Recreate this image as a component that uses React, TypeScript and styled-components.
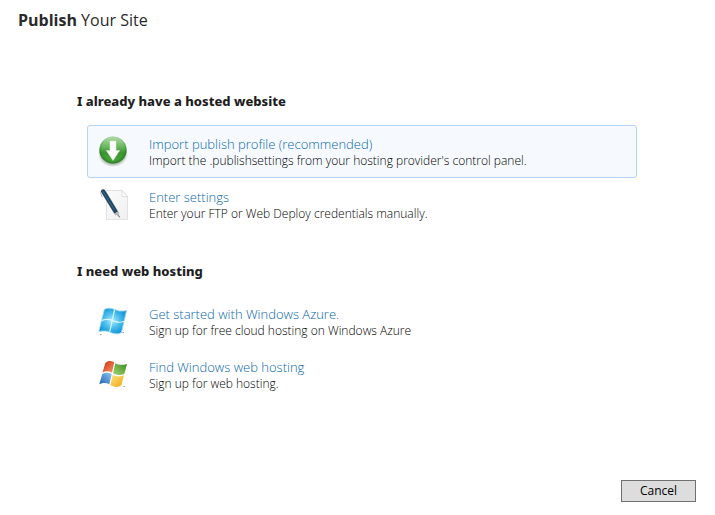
import React from "react";
import styled, { createGlobalStyle } from "styled-components";

const GlobalStyle = createGlobalStyle`
  * { box-sizing: border-box; }
  html, body, #root { height: 100%; }
  body {
    margin: 0;
    background: #ffffff;
    color: #333333;
    font-family: "Open Sans", "Noto Sans", sans-serif;
  }
`;

const Dialog = styled.div`
  min-height: 100%;
  display: flex;
  flex-direction: column;
`;

const Title = styled.h1`
  margin: 0;
  padding: 8px 18px;
  font-size: 16px;
  line-height: 24px;
  font-weight: 400;
  color: #2a2a2a;

  strong { font-weight: 700; }
`;

const Content = styled.main`
  flex: 1;
  padding: 51px 78px 0 77px;
`;

const Section = styled.section`
  margin-bottom: 30px;
`;

const SectionTitle = styled.h2`
  margin: 0 0 14px;
  font-family: "Noto Sans", "Open Sans", sans-serif;
  font-size: 13px;
  line-height: 20px;
  font-weight: 800;
  color: #1e1e1e;
`;

const OptionList = styled.ul`
  margin: 0;
  padding: 0 0 0 10px;
  list-style: none;
`;

const Option = styled.a<{ $active?: boolean }>`
  display: flex;
  align-items: center;
  gap: 19px;
  height: 53px;
  padding: 0 10px;
  border: 1px solid ${(p) => (p.$active ? "#b4d3f8" : "transparent")};
  border-radius: 3px;
  background: ${(p) => (p.$active ? "#f6fafe" : "transparent")};
  text-decoration: none;

  svg { flex: none; }
`;

const OptionText = styled.span`
  display: flex;
  flex-direction: column;
  padding-top: 2px;
  font-weight: 300;
`;

const OptionTitle = styled.span`
  font-size: 13px;
  line-height: 17px;
  color: #0a68ac;
`;

const OptionDetail = styled.span`
  font-size: 12px;
  line-height: 16px;
  color: #000000;
`;

const Footer = styled.footer`
  display: flex;
  justify-content: flex-end;
  padding: 13px 19px;
`;

const CancelButton = styled.button`
  width: 75px;
  height: 22px;
  padding: 0;
  border: 1px solid #707070;
  background: #dddddd;
  color: #000000;
  font-family: inherit;
  font-size: 12px;
  line-height: 16px;
`;

const ImportIcon = () => (
  <svg width="32" height="32" viewBox="0 0 32 32" aria-hidden="true">
    <defs>
      <linearGradient id="ball" x1="0" y1="0" x2="0" y2="1">
        <stop offset="0" stopColor="#b4dcac" />
        <stop offset="0.4" stopColor="#66b55b" />
        <stop offset="0.6" stopColor="#3a9630" />
        <stop offset="1" stopColor="#48ad3b" />
      </linearGradient>
      <radialGradient id="ballShade" cx="0.5" cy="0.45" r="0.55">
        <stop offset="0.75" stopColor="#1c5b17" stopOpacity="0" />
        <stop offset="1" stopColor="#1c5b17" stopOpacity="0.6" />
      </radialGradient>
      <radialGradient id="ballShadow">
        <stop offset="0.7" stopColor="#506050" stopOpacity="0.55" />
        <stop offset="1" stopColor="#506050" stopOpacity="0" />
      </radialGradient>
    </defs>
    <ellipse cx="15" cy="18" rx="15" ry="13" fill="url(#ballShadow)" />
    <circle cx="15" cy="14" r="13.6" fill="url(#ball)" />
    <circle cx="15" cy="14" r="13.6" fill="url(#ballShade)" />
    <path d="M12 5h6v9.500h3.700L15 24.500 8.300 14.500H12z" fill="#ffffff" stroke="#d8ead5" strokeWidth="0.5" />
  </svg>
);

const SettingsIcon = () => (
  <svg width="32" height="32" viewBox="0 0 32 32" aria-hidden="true">
    <defs>
      <linearGradient id="sheet" x1="0" y1="0" x2="1" y2="1">
        <stop offset="0" stopColor="#fcfcfc" />
        <stop offset="1" stopColor="#f0f0f0" />
      </linearGradient>
    </defs>
    <path d="M8.500 1.500H24l5.500 6v23h-21z" fill="url(#sheet)" stroke="#e2e2e2" />
    <path d="M24 1.500v6h5.500z" fill="#ffffff" stroke="#d8d8d8" strokeWidth="0.8" />
    <path d="M7 5 19.500 25.500" stroke="#c9ccd0" strokeWidth="5" />
    <path d="M5.200 2.400 17.800 23" stroke="#1f4560" strokeWidth="4.200" strokeLinecap="round" />
    <path d="M4.800 2.200 16.500 21" stroke="#3f6c8a" strokeWidth="1" />
    <path d="M2.500 2.500 4 8" stroke="#a5adb4" strokeWidth="1" />
    <path d="M16.200 24.500 20 22.300 22 28.500z" fill="#b2b6ba" />
    <path d="m20.500 26.500 1.200 2" stroke="#777777" strokeWidth="1" />
  </svg>
);

const PANES: { id: string; d: string; from: string; to: string }[] = [
  {
    id: "paneRed",
    d: "M7.200 4.200C10 1.500 13 1.600 16.300 3.300L14 13.600C10.800 11.900 7.500 12 4.500 13.500z",
    from: "#c92d12",
    to: "#f79a6a",
  },
  {
    id: "paneGreen",
    d: "M17.300 4.200C20.500 6 24.500 6.400 29 5L26.300 14.900C22.300 16.600 18.300 16.200 15 14.300z",
    from: "#398a1c",
    to: "#a5d673",
  },
  {
    id: "paneBlue",
    d: "M4.200 14.900C7.300 13.300 10.500 13.300 13.700 15L11.300 25.200C8 23.300 5 23.700 1.300 25.200z",
    from: "#2262b4",
    to: "#8dc8ef",
  },
  {
    id: "paneYellow",
    d: "M14.700 15.700C18.300 17.700 22 18 26 16.300L23.300 26.300C19.800 28.900 15.800 28 12.300 25.900z",
    from: "#f0a415",
    to: "#fde67c",
  },
];

const WindowsIcon = () => (
  <svg width="32" height="32" viewBox="0 0 32 32" aria-hidden="true">
    <defs>
      {PANES.map(({ id, from, to }, i) => (
        <linearGradient key={id} id={id} x1={i % 2} y1={i < 2 ? 0 : 1} x2={i % 2 ? 0 : 1} y2={i < 2 ? 1 : 0}>
          <stop offset="0" stopColor={from} />
          <stop offset="1" stopColor={to} />
        </linearGradient>
      ))}
    </defs>
    {PANES.map(({ id, d }) => (
      <path key={id} d={d} fill={`url(#${id})`} />
    ))}
    <path d="M25.500 27.500h1.500" stroke="#999999" strokeWidth="1" />
  </svg>
);

const AzureIcon = () => (
  <svg width="32" height="32" viewBox="0 0 32 32" aria-hidden="true">
    <defs>
      <radialGradient id="azure" cx="0.48" cy="0.48" r="0.6">
        <stop offset="0" stopColor="#b5ecfb" />
        <stop offset="0.4" stopColor="#57c4ef" />
        <stop offset="0.8" stopColor="#1f9fdf" />
        <stop offset="1" stopColor="#1585cc" />
      </radialGradient>
    </defs>
    <path
      d="M6.300 3.500C12 0 18 4.600 21.500 5 24 5.300 26 5 28.500 4.500L23.500 26.500C17.500 30 12.500 25.600 8.500 25.200 5.500 24.800 3 25 .8 25.500z"
      fill="url(#azure)"
      stroke="#9bdcf4"
      strokeWidth="0.9"
    />
    <path d="M16.600 3.500 11.700 25.800M3.600 14.600C10 11.600 13 13.900 16 15.100S22 17.100 26 15.300" fill="none" stroke="#d6f5fc" strokeWidth="1.200" />
    <path d="M2 28.500h1.500M24.500 26.500h1.500" stroke="#999999" strokeWidth="1" />
  </svg>
);

type Choice = { title: string; detail: string; Icon: React.FC; active?: boolean };

const sections: { heading: string; choices: Choice[] }[] = [
  {
    heading: "I already have a hosted website",
    choices: [
      {
        title: "Import publish profile (recommended)",
        detail: "Import the .publishsettings from your hosting provider's control panel.",
        Icon: ImportIcon,
        active: true,
      },
      {
        title: "Enter settings",
        detail: "Enter your FTP or Web Deploy credentials manually.",
        Icon: SettingsIcon,
      },
    ],
  },
  {
    heading: "I need web hosting",
    choices: [
      {
        title: "Get started with Windows Azure.",
        detail: "Sign up for free cloud hosting on Windows Azure",
        Icon: AzureIcon,
      },
      {
        title: "Find Windows web hosting",
        detail: "Sign up for web hosting.",
        Icon: WindowsIcon,
      },
    ],
  },
];

export default function App() {
  return (
    <>
      <GlobalStyle />
      <Dialog>
        <Title>
          <strong>Publish</strong> Your Site
        </Title>
        <Content>
          {sections.map(({ heading, choices }) => (
            <Section key={heading}>
              <SectionTitle>{heading}</SectionTitle>
              <OptionList>
                {choices.map(({ title, detail, Icon, active }) => (
                  <li key={title}>
                    <Option href="#" $active={active}>
                      <Icon />
                      <OptionText>
                        <OptionTitle>{title}</OptionTitle>
                        <OptionDetail>{detail}</OptionDetail>
                      </OptionText>
                    </Option>
                  </li>
                ))}
              </OptionList>
            </Section>
          ))}
        </Content>
        <Footer>
          <CancelButton type="button">Cancel</CancelButton>
        </Footer>
      </Dialog>
    </>
  );
}
